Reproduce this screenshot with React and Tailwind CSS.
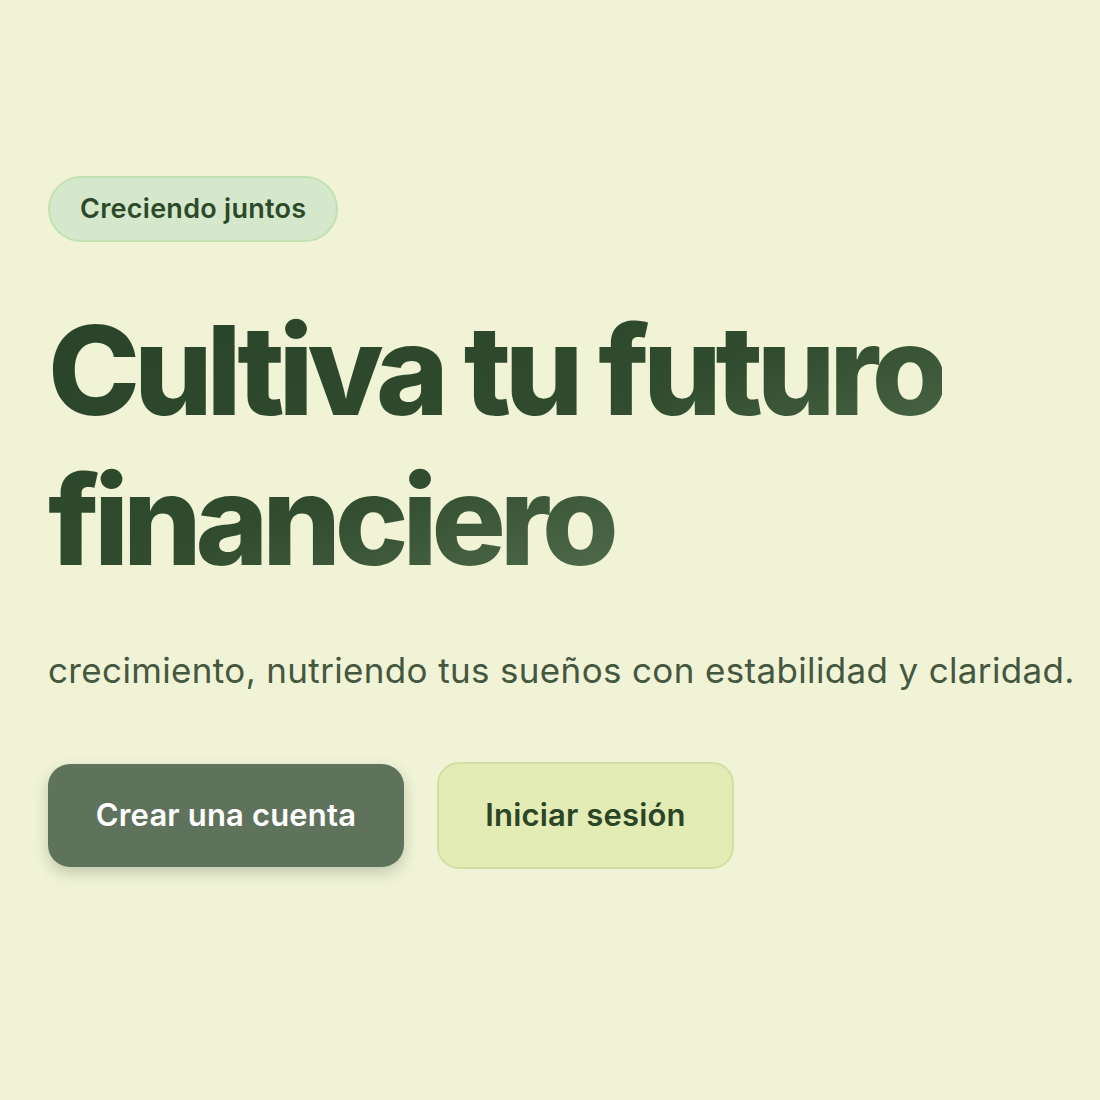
export default function App() {
  return (
    <div className="min-h-[1100px] w-[1100px] bg-[#f0f3d6] overflow-hidden" style={{ fontFamily: "Inter, 'Noto Sans', sans-serif" }}>
      <div className="pl-[48px] pt-[176px] flex flex-col items-start">
        <div className="h-[66px] px-[30px] rounded-full bg-[#d5e8cc] border-2 border-[#c3e0b1] flex items-center text-[27px] font-semibold text-[#2c4a29] tracking-[0.01em]">
          Creciendo juntos
        </div>
        <h1 className="mt-[53px] text-[124px] leading-[150px] font-extrabold tracking-[-0.05em] bg-gradient-to-br from-[#29432a] via-[#304b2d] to-[#6a8665] bg-clip-text text-transparent whitespace-nowrap">
          Cultiva tu futuro
          <br />
          financiero
        </h1>
        <p className="mt-[50px] text-[35px] leading-[51px] text-[#46573f] tracking-[0.01em] whitespace-nowrap">
          crecimiento, nutriendo tus sueños con estabilidad y claridad.
        </p>
        <div className="mt-[66px] flex items-center gap-[33px]">
          <button className="w-[356px] h-[103px] rounded-[22px] bg-[#5f735c] text-white text-[31px] font-semibold tracking-[0.005em] shadow-[0_6px_14px_rgba(60,80,50,0.25)]">
            Crear una cuenta
          </button>
          <button className="w-[297px] h-[107px] rounded-[22px] bg-[#e4ecb6] border-2 border-[#d2dea4] text-[#2b4527] text-[31px] font-semibold tracking-[0.005em]">
            Iniciar sesión
          </button>
        </div>
      </div>
    </div>
  );
}
